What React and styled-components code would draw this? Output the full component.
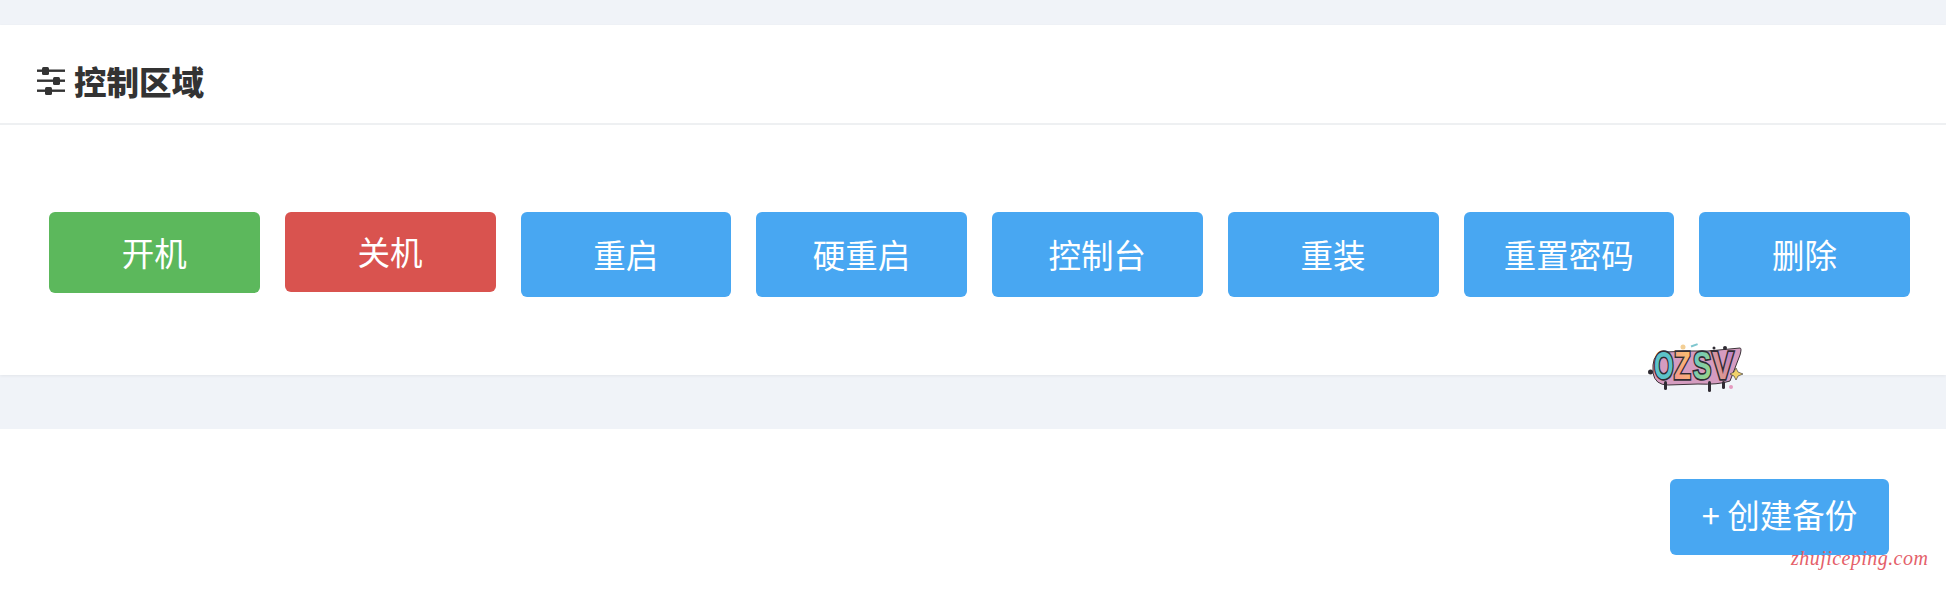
import React from 'react';
import styled, { createGlobalStyle } from 'styled-components';

const GlobalStyle = createGlobalStyle`
  html, body {
    margin: 0;
    padding: 0;
    background: #f0f3f8;
    font-family: "Noto Sans CJK SC", "Open Sans", sans-serif;
  }
`;

const Page = styled.div`
  position: relative;
  width: 1946px;
  height: 592px;
  overflow: hidden;
  padding-top: 25px;
  box-sizing: border-box;
  display: flex;
  flex-direction: column;
`;

const Panel = styled.section`
  height: 350px;
  flex-shrink: 0;
  background: #fff;
  box-shadow: 0 1px 3px rgba(0, 0, 0, 0.06);
`;

const PanelHeader = styled.header`
  height: 84px;
  padding: 14px 0 0 37px;
  display: flex;
  align-items: center;
  gap: 9px;
  border-bottom: 2px solid #eef0f2;
`;

const Title = styled.h2`
  margin: 0;
  font-size: 32.5px;
  line-height: 40px;
  font-weight: 900;
  color: #333;
`;

const ButtonRow = styled.div`
  display: grid;
  grid-template-columns: repeat(8, 1fr);
  gap: 25px;
  align-items: start;
  padding: 87px 36px 0 49px;
`;

const Button = styled.button`
  display: block;
  height: ${(p) => p.$height}px;
  padding: 0 0 ${(p) => p.$lift || 3}px;
  border: 0;
  border-radius: 6px;
  background: ${(p) => p.$color};
  color: #fff;
  font-family: inherit;
  font-size: 32.5px;
  font-weight: 400;
`;

const BackupSection = styled.section`
  margin-top: 54px;
  flex: 1;
  background: #fff;
  display: flex;
  justify-content: flex-end;
  align-items: flex-start;
  padding: 50px 57px 0 0;
`;

const BackupButton = styled(Button)`
  width: 219px;
`;

const Logo = styled.svg`
  position: absolute;
  left: 1648px;
  top: 343px;
`;

const Watermark = styled.span`
  position: absolute;
  left: 1791px;
  top: 546px;
  font-family: "Liberation Serif", serif;
  font-style: italic;
  font-size: 20px;
  line-height: 24px;
  letter-spacing: 0.45px;
  color: #e4606a;
`;

const GREEN = '#5cb85c';
const RED = '#d9534f';
const BLUE = '#48a7f2';

const actions = [
  { label: '开机', color: GREEN, height: 81 },
  { label: '关机', color: RED, height: 80 },
  { label: '重启', color: BLUE, height: 85 },
  { label: '硬重启', color: BLUE, height: 85 },
  { label: '控制台', color: BLUE, height: 85 },
  { label: '重装', color: BLUE, height: 85 },
  { label: '重置密码', color: BLUE, height: 85 },
  { label: '删除', color: BLUE, height: 85 },
];

function SlidersIcon() {
  return (
    <svg width="28" height="28" viewBox="0 0 28 28" fill="#333">
      <rect x="0" y="2.5" width="28" height="2.4" />
      <rect x="5" y="0" width="7" height="8" rx="1.5" />
      <rect x="0" y="12.5" width="28" height="2.4" />
      <rect x="16" y="10" width="7" height="8" rx="1.5" />
      <rect x="0" y="22.5" width="28" height="2.4" />
      <rect x="8" y="20" width="7" height="8" rx="1.5" />
    </svg>
  );
}

function OzsvLogo() {
  const letterStyle = {
    fontFamily: '"Liberation Sans", sans-serif',
    fontWeight: 700,
    fontSize: 38,
    stroke: '#2f2b33',
    strokeWidth: 3.4,
    paintOrder: 'stroke',
  };
  const letters = [
    { ch: 'O', x: 6, scale: 0.66, fill: '#5cc3c9' },
    { ch: 'Z', x: 26, scale: 0.72, fill: 'url(#ozsv-z)' },
    { ch: 'S', x: 45, scale: 0.72, fill: 'url(#ozsv-s)' },
    { ch: 'V', x: 64, scale: 0.85, fill: 'url(#ozsv-v)' },
  ];
  return (
    <Logo width="96" height="50" viewBox="0 0 96 50">
      <defs>
        <linearGradient id="ozsv-v" x1="0" y1="1" x2="1" y2="0">
          <stop offset="0" stopColor="#f6a36b" />
          <stop offset="1" stopColor="#b07fdc" />
        </linearGradient>
        <linearGradient id="ozsv-z" x1="0" y1="1" x2="1" y2="0">
          <stop offset="0" stopColor="#f58f8f" />
          <stop offset="1" stopColor="#f8c76a" />
        </linearGradient>
        <linearGradient id="ozsv-s" x1="0" y1="0" x2="1" y2="1">
          <stop offset="0" stopColor="#5fc4cf" />
          <stop offset="1" stopColor="#a7d77a" />
        </linearGradient>
      </defs>
      <path
        d="M5 22 Q6 9 18 9 L40 8 L60 8 L92 5 Q94 5 92 12 L82 38 Q70 42 50 41 L20 42 Q7 42 5 30 Z"
        fill="#d59cc0"
        stroke="#3b3238"
        strokeWidth="1"
      />
      {letters.map((l) => (
        <text key={l.ch} fill={l.fill} style={letterStyle} transform={`translate(${l.x} 36) scale(${l.scale} 1)`}>
          {l.ch}
        </text>
      ))}
      <g fill="#2f2b33">
        <rect x="16" y="38" width="3" height="9" rx="1.5" />
        <rect x="60" y="38" width="3" height="11" rx="1.5" />
        <rect x="74" y="38" width="3" height="8" rx="1.5" />
        <circle cx="2.5" cy="29" r="2.5" />
        <circle cx="66" cy="5" r="1.5" />
        <circle cx="77" cy="5" r="2" />
      </g>
      <circle cx="35" cy="4" r="2.5" fill="#f3cf95" />
      <rect x="43" y="1.5" width="7" height="2" fill="#7fc7cf" transform="rotate(-20 46 3)" />
      <circle cx="83" cy="44" r="2" fill="#e59ac0" />
      <path d="M88 25 L90 29 L95 31 L90 33 L88 37 L86 33 L82 31 L86 29 Z" fill="#f1d36a" stroke="#2f2b33" strokeWidth="0.6" />
    </Logo>
  );
}

export default function App() {
  return (
    <Page>
      <GlobalStyle />
      <Panel>
        <PanelHeader>
          <SlidersIcon />
          <Title>控制区域</Title>
        </PanelHeader>
        <ButtonRow>
          {actions.map((a) => (
            <Button key={a.label} $color={a.color} $height={a.height}>{a.label}</Button>
          ))}
        </ButtonRow>
      </Panel>
      <BackupSection>
        <BackupButton $color={BLUE} $height={76} $lift={8}>+ 创建备份</BackupButton>
      </BackupSection>
      <OzsvLogo />
      <Watermark>zhujiceping.com</Watermark>
    </Page>
  );
}
